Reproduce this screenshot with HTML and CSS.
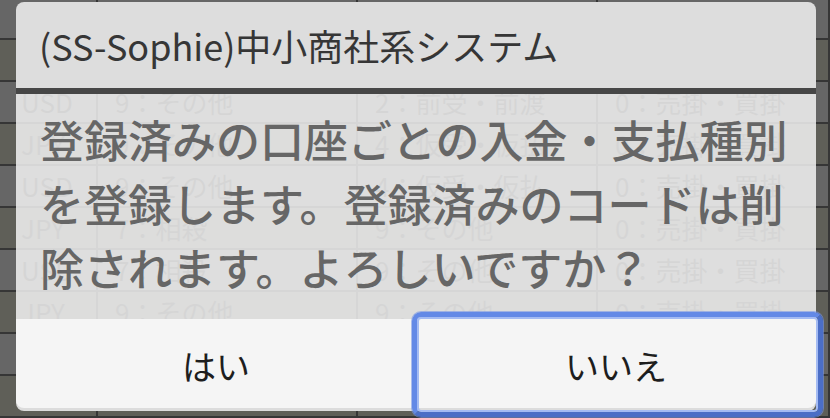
FILE: index.html
```html
<!DOCTYPE html>
<html lang="ja">
<head>
  <meta charset="UTF-8">
  <meta name="viewport" content="width=device-width, initial-scale=1.0">
  <title>入出金種別登録</title>
  <link rel="stylesheet" href="styles.css">
</head>
<body>
  <table class="grid">
    <colgroup>
      <col class="col-cur">
      <col class="col-in">
      <col class="col-out">
      <col>
    </colgroup>
    <tbody>
      <tr><td>JPY</td><td>9：その他</td><td>2：前受・前渡</td><td>0：売掛・買掛</td></tr>
      <tr><td>USD</td><td>7：相殺</td><td>9：その他</td><td>0：売掛・買掛</td></tr>
      <tr><td>USD</td><td>9：その他</td><td>2：前受・前渡</td><td>0：売掛・買掛</td></tr>
      <tr><td>JPY</td><td>9：その他</td><td>4：仮受・仮払</td><td>0：売掛・買掛</td></tr>
      <tr><td>USD</td><td>9：その他</td><td>4：仮受・仮払</td><td>0：売掛・買掛</td></tr>
      <tr><td>JPY</td><td>7：相殺</td><td>9：その他</td><td>0：売掛・買掛</td></tr>
      <tr><td>USD</td><td>7：相殺</td><td>9：その他</td><td>0：売掛・買掛</td></tr>
      <tr><td>JPY</td><td>9：その他</td><td>9：その他</td><td>0：売掛・買掛</td></tr>
      <tr><td>USD</td><td>9：その他</td><td>2：前受・前渡</td><td>0：売掛・買掛</td></tr>
      <tr><td>JPY</td><td>7：相殺</td><td>4：仮受・仮払</td><td>0：売掛・買掛</td></tr>
    </tbody>
  </table>

  <div class="dialog" role="dialog">
    <div class="dialog-title">(SS-Sophie)中小商社系システム</div>
    <div class="dialog-body">登録済みの口座ごとの入金・支払種別を登録します。登録済みのコードは削除されます。よろしいですか？</div>
    <div class="dialog-buttons">
      <button class="btn btn-yes">はい</button>
      <button class="btn btn-no focused">いいえ</button>
    </div>
  </div>
</body>
</html>
```

FILE: styles.css
```css
body {
  margin: 0;
  font-family: "Noto Sans CJK JP", "Noto Sans", sans-serif;
  background-color: #666666;
  overflow: hidden;
}

/* 背景の一覧 */
.grid {
  border-collapse: collapse;
  table-layout: fixed;
  width: 100%;
  margin-top: -2px;
  font-size: 26px;
  color: #333333;
}

.col-cur { width: 97px; }
.col-in { width: 260px; }
.col-out { width: 240px; }

.grid td {
  height: 40px;
  padding: 0 0 0 17px;
  border-bottom: 2px solid #363636;
  border-right: 2px solid #363636;
  white-space: nowrap;
  overflow: hidden;
  line-height: 40px;
}

.grid td:first-child {
  padding-left: 21px;
}

.grid tr:nth-child(odd) td {
  background-color: #666666;
}

.grid tr:nth-child(even) td {
  background-color: #5f5f58;
}

/* ダイアログ */
.dialog {
  position: absolute;
  top: 2px;
  left: 16px;
  width: 800px;
}

.dialog-title {
  height: 86px;
  padding: 0 23px;
  display: flex;
  align-items: center;
  font-size: 36px;
  color: #363636;
  background-color: #dddddd;
  border-radius: 8px 8px 0 0;
  border-bottom: 6px solid #464646;
}

.dialog-body {
  height: 225px;
  box-sizing: border-box;
  padding: 13px 22px 0 24px;
  font-size: 44px;
  font-weight: 500;
  line-height: 64px;
  color: #666666;
  background-color: rgba(246, 246, 246, 0.83);
}

.dialog-buttons {
  display: flex;
  padding-bottom: 3px;
  background-color: #dcdcdc;
  border-radius: 0 0 8px 8px;
}

.btn {
  flex: 1;
  height: 89px;
  border: none;
  background-color: #f5f5f5;
  font-family: inherit;
  font-size: 34px;
  color: #1e1e1e;
  padding: 4px 0 0;
  position: relative;
}

.btn-yes {
  border-radius: 0 0 0 8px;
}

.btn-no {
  border-radius: 0 0 8px 0;
}

/* フォーカス枠 */
.focused::after {
  content: "";
  position: absolute;
  top: -7px;
  right: -7px;
  bottom: -9px;
  left: -4px;
  border: 5px solid #6389e6;
  border-right-color: #4b6ec6;
  border-bottom-color: #4b6ec6;
  border-radius: 9px;
  box-shadow: inset 0 0 0 2px #a4bbf3, 0 0 0 1px rgba(120, 150, 230, 0.6);
}
```
